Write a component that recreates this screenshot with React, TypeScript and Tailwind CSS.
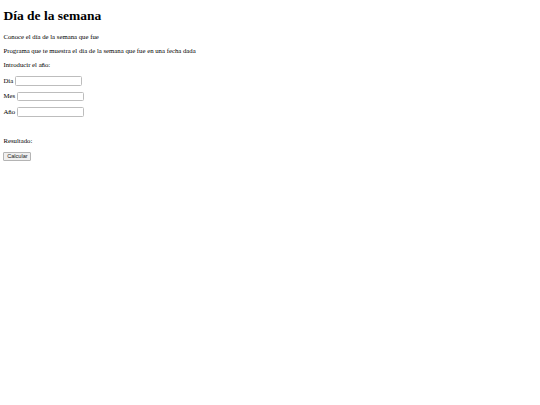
export default function App() {
  const serif = { fontFamily: '"Liberation Serif", "Times New Roman", serif' };
  return (
    <div className="w-[540px] h-[405px] bg-white text-black px-[3.4px] flex flex-col" style={serif}>
      <h1 className="mt-[8px] h-[16px] flex items-center text-[13.5px] font-bold leading-none">Día de la semana</h1>
      <p className="mt-[9px] h-[8px] flex items-center text-[6.75px] leading-none">Conoce el día de la semana que fue</p>
      <p className="mt-[6px] h-[8px] flex items-center text-[6.75px] leading-none">Programa que te muestra el día de la semana que fue en una fecha dada</p>
      <p className="mt-[6px] h-[8px] flex items-center text-[6.75px] leading-none">Introducir el año:</p>
      <div className="mt-[7px] h-[10px] flex items-center text-[6.75px] leading-none">
        <span>Día</span>
        <input type="text" className="ml-[2px] w-[67px] h-[9.5px] border border-[#bdbdbd] rounded-[1.5px] bg-white outline-none" />
      </div>
      <div className="mt-[5.5px] h-[10px] flex items-center text-[6.75px] leading-none">
        <span>Mes</span>
        <input type="text" className="ml-[2px] w-[67px] h-[9.5px] border border-[#bdbdbd] rounded-[1.5px] bg-white outline-none" />
      </div>
      <div className="mt-[5.5px] h-[10px] flex items-center text-[6.75px] leading-none">
        <span>Año</span>
        <input type="text" className="ml-[2px] w-[67px] h-[9.5px] border border-[#bdbdbd] rounded-[1.5px] bg-white outline-none" />
      </div>
      <p className="mt-[20px] h-[8px] flex items-center text-[6.75px] leading-none">Resultado:</p>
      <div className="mt-[6.5px] h-[10px] flex items-center">
        <button
          className="w-[28px] h-[9px] flex items-center justify-center border border-[#b4b4b4] rounded-[1px] bg-[#efefef] text-[5.6px] leading-none text-[#222]"
          style={{ fontFamily: '"Liberation Sans", Arial, sans-serif' }}
        >
          Calcular
        </button>
      </div>
    </div>
  );
}
